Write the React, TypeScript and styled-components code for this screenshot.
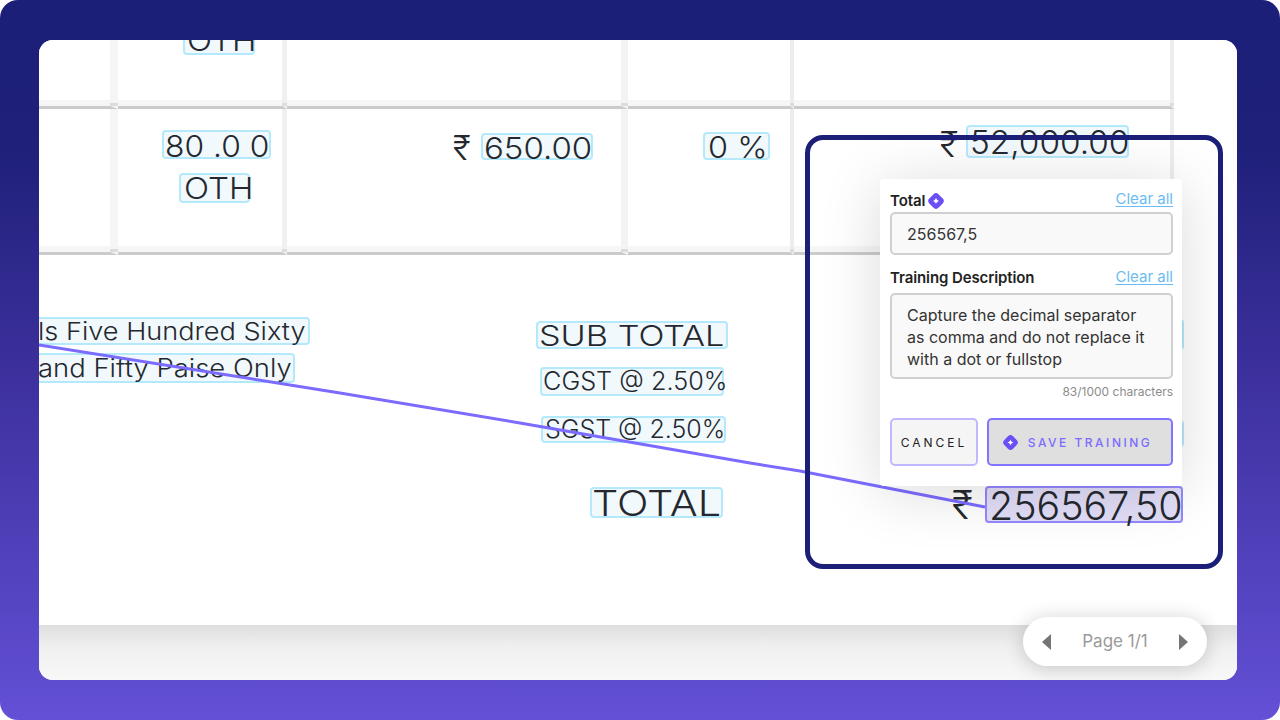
import styled, { createGlobalStyle } from "styled-components";

const GlobalStyle = createGlobalStyle`
  html, body {
    margin: 0;
    padding: 0;
    background: #fff;
  }
  * {
    box-sizing: border-box;
  }
`;

interface TokenData {
  text: string;
  x: number;
  y: number;
  w: number;
  h: number;
  size: number;
  stretch?: number;
  pad?: number;
  lift?: number;
  active?: boolean;
}

// window coordinates, the boxes sit on the scanned document
const tokens: TokenData[] = [
  { text: "OTH", x: 144, y: -15, w: 72, h: 30, size: 30, stretch: 1.1, pad: 2 },
  { text: "80 .0 0", x: 123, y: 90, w: 109, h: 29, size: 30, stretch: 1.06, pad: 1, lift: 1 },
  { text: "OTH", x: 140, y: 133, w: 71, h: 30, size: 30, stretch: 1.1, pad: 3 },
  { text: "650.00", x: 442, y: 93, w: 112, h: 27, size: 30, stretch: 1.1, pad: 1, lift: 1 },
  { text: "0 %", x: 664, y: 92, w: 67, h: 28, size: 30, stretch: 1.08, pad: 3, lift: 1 },
  { text: "52,000.00", x: 927, y: 85, w: 163, h: 33, size: 33, stretch: 1.01, pad: 2, lift: 1 },
  { text: "ls Five Hundred Sixty", x: -3, y: 277, w: 274, h: 28, size: 24, stretch: 1.13, pad: 0, lift: 1 },
  { text: "and Fifty Paise Only", x: -3, y: 313, w: 259, h: 30, size: 25, stretch: 1.097, pad: 0 },
  { text: "SUB TOTAL", x: 497, y: 281, w: 192, h: 28, size: 29, stretch: 1.18, pad: 1 },
  { text: "CGST @ 2.50%", x: 501, y: 327, w: 184, h: 29, size: 25, stretch: 1.01, pad: 1 },
  { text: "SGST @ 2.50%", x: 502, y: 376, w: 185, h: 27, size: 25, stretch: 1.0, pad: 2 },
  { text: "TOTAL", x: 551, y: 447, w: 133, h: 31, size: 36, stretch: 1.15, pad: 0 },
  { text: "", x: 1000, y: 279, w: 145, h: 31, size: 20 },
  { text: "", x: 1000, y: 380, w: 145, h: 27, size: 20 },
  { text: "256567,50", x: 946, y: 446, w: 198, h: 37, size: 39, stretch: 1.01, pad: 2, lift: 1, active: true },
];

const rupees = [
  { x: 414, y: 88, size: 34 },
  { x: 901, y: 83, size: 35 },
  { x: 913, y: 441, size: 40 },
];

const columns = [
  { width: 79, line: 8, tone: "#f5f5f5" },
  { width: 169, line: 5, tone: "#f0f0f0" },
  { width: 341, line: 7, tone: "#f3f3f3" },
  { width: 166, line: 4, tone: "#ededed" },
  { width: 380, line: 4, tone: "#ededed" },
];

function Spark({ size }: { size: number }) {
  return (
    <svg width={size} height={size} viewBox="0 0 16 16">
      <rect x="2.2" y="2.2" width="11.6" height="11.6" rx="3.4" transform="rotate(45 8 8)" fill="#6b4ff5" />
      <path
        d="M8 5.2c.3 1.4 1.2 2.4 2.8 2.8-1.6.4-2.5 1.4-2.8 2.8-.3-1.4-1.2-2.4-2.8-2.8 1.6-.4 2.5-1.4 2.8-2.8z"
        fill="#fff"
      />
    </svg>
  );
}

function App() {
  return (
    <Shell>
      <GlobalStyle />
      <Window>
        <Sheet>
          <Table>
            {[69, 146].map(height =>
              columns.map(col => (
                <Cell key={`${height}-${col.width}`} $height={height} $line={col.line} $tone={col.tone} />
              ))
            )}
          </Table>

          {tokens.map(t => (
            <Token
              key={`${t.text}-${t.x}-${t.y}`}
              $x={t.x}
              $y={t.y}
              $w={t.w}
              $h={t.h}
              $size={t.size}
              $pad={t.pad ?? 0}
              $active={t.active}
            >
              <TokenText $stretch={t.stretch ?? 1} $lift={t.lift ?? 0}>
                {t.text}
              </TokenText>
            </Token>
          ))}

          {rupees.map(r => (
            <Rupee key={r.x} $x={r.x} $y={r.y} $size={r.size}>
              ₹
            </Rupee>
          ))}

          <Connector viewBox="0 0 1198 640" width="1198" height="640">
            <polyline
              points="0,305 301,353 481,383 711,423 761,431 946,467"
              fill="none"
              stroke="#7b6cff"
              strokeWidth="3"
            />
          </Connector>

          <Frame />

          <Popup>
            <FieldHead>
              <FieldLabel $drop={2}>
                Total
                <Spark size={18} />
              </FieldLabel>
              <ClearLink>Clear all</ClearLink>
            </FieldHead>
            <ValueBox>256567,5</ValueBox>

            <FieldHead $gap>
              <FieldLabel>Training Description</FieldLabel>
              <ClearLink>Clear all</ClearLink>
            </FieldHead>
            <DescriptionBox>
              Capture the decimal separator
              <br />
              as comma and do not replace it
              <br />
              with a dot or fullstop
            </DescriptionBox>
            <Counter>83/1000 characters</Counter>

            <Actions>
              <CancelButton>CANCEL</CancelButton>
              <SaveButton>
                <Spark size={17} />
                SAVE TRAINING
              </SaveButton>
            </Actions>
          </Popup>
        </Sheet>

        <Footer />

        <Pager>
          <ArrowLeft />
          <PageLabel>Page 1/1</PageLabel>
          <ArrowRight />
        </Pager>
      </Window>
    </Shell>
  );
}

export default App;

const Shell = styled.div`
  width: 1280px;
  height: 720px;
  padding: 40px 43px 40px 39px;
  border-radius: 18px;
  overflow: hidden;
  background: linear-gradient(180deg, #1c1f78 0%, #1e2079 20%, #3b2f9b 50%, #6350d6 100%);
  font-family: Inter, "Liberation Sans", sans-serif;
`;

const Window = styled.div`
  position: relative;
  display: flex;
  flex-direction: column;
  width: 1198px;
  height: 640px;
  border-radius: 14px;
  overflow: hidden;
  background: #fff;
`;

const Sheet = styled.div`
  position: relative;
  height: 585px;
  flex: none;
  background: #fff;
`;

const Footer = styled.div`
  flex: 1;
  background: linear-gradient(180deg, #dedede 0%, #f0f0f0 40%, #f8f8f8 100%);
`;

const Table = styled.div`
  display: grid;
  grid-template-columns: ${columns.map(c => `${c.width}px`).join(" ")};
  width: 1135px;
`;

const Cell = styled.div<{ $height: number; $line: number; $tone: string }>`
  position: relative;
  height: ${p => p.$height}px;
  border-right: ${p => p.$line}px solid ${p => p.$tone};
  border-bottom: 3px solid #cbcbcb;
  box-shadow: inset 0 -6px 0 #f6f6f6;

  &::after {
    content: "";
    position: absolute;
    right: -${p => p.$line}px;
    bottom: 0;
    width: ${p => p.$line}px;
    height: 3px;
    background: #dcdcdc;
  }
`;

const Token = styled.div<{
  $x: number;
  $y: number;
  $w: number;
  $h: number;
  $size: number;
  $pad: number;
  $active?: boolean;
}>`
  position: absolute;
  left: ${p => p.$x}px;
  top: ${p => p.$y}px;
  width: ${p => p.$w}px;
  height: ${p => p.$h}px;
  display: flex;
  align-items: center;
  padding-left: ${p => p.$pad}px;
  white-space: nowrap;
  border-radius: 4px;
  border: 2px solid ${p => (p.$active ? "#9488ff" : "#b4e9fb")};
  background: ${p => (p.$active ? "#e2def9" : "#f1f9fd")};
  color: #25282e;
  font-size: ${p => p.$size}px;
  font-weight: 300;
  line-height: 1;
`;

// the scanned text is wider than any installed face, so it gets stretched per box
const TokenText = styled.span<{ $stretch: number; $lift: number }>`
  display: inline-block;
  transform-origin: left center;
  transform: translateY(${p => p.$lift}px) scaleX(${p => p.$stretch});
`;

const Rupee = styled.span<{ $x: number; $y: number; $size: number }>`
  position: absolute;
  left: ${p => p.$x}px;
  top: ${p => p.$y}px;
  color: #25282e;
  font-size: ${p => p.$size}px;
  font-weight: 300;
  line-height: 1.2;
`;

const Connector = styled.svg`
  position: absolute;
  left: 0;
  top: 0;
  pointer-events: none;
`;

const Frame = styled.div`
  position: absolute;
  left: 766px;
  top: 95px;
  width: 418px;
  height: 434px;
  border: 5px solid #1c1f78;
  border-radius: 18px;
`;

const Popup = styled.div`
  position: absolute;
  left: 841px;
  top: 139px;
  width: 302px;
  height: 307px;
  padding: 11px 9px 0 10px;
  border-radius: 4px;
  background: #fff;
  box-shadow: 0 6px 60px rgba(0, 0, 0, 0.15);
`;

const FieldHead = styled.div<{ $gap?: boolean }>`
  display: flex;
  align-items: center;
  justify-content: space-between;
  height: 19px;
  margin-top: ${p => (p.$gap ? "13px" : "0")};
  margin-bottom: ${p => (p.$gap ? "6px" : "3px")};
`;

const FieldLabel = styled.span<{ $drop?: number }>`
  display: flex;
  align-items: center;
  gap: 2px;
  margin-top: ${p => p.$drop ?? 0}px;
  color: #222;
  font-size: 15px;
  font-weight: 600;
  letter-spacing: -0.1px;
`;

const ClearLink = styled.a`
  margin-top: -3px;
  color: #6bbcf2;
  font-size: 15px;
  text-decoration: underline;
  text-underline-offset: 2px;
`;

const ValueBox = styled.div`
  display: flex;
  align-items: center;
  height: 43px;
  padding-left: 15px;
  border: 2px solid #d0d0d0;
  border-radius: 5px;
  background: #f9f9f9;
  color: #333;
  font-size: 16px;
`;

const DescriptionBox = styled.div`
  height: 86px;
  padding: 9px 0 0 15px;
  border: 2px solid #d0d0d0;
  border-radius: 5px;
  background: #f9f9f9;
  color: #333;
  font-size: 16px;
  line-height: 22px;
  white-space: nowrap;
`;

const Counter = styled.div`
  margin-top: 5px;
  color: #8c8c8c;
  font-size: 12px;
  line-height: 15px;
  text-align: right;
`;

const Actions = styled.div`
  display: flex;
  gap: 9px;
  margin-top: 19px;
`;

const CancelButton = styled.button`
  width: 88px;
  height: 48px;
  padding: 0;
  border: 2px solid #c0b9ff;
  border-radius: 5px;
  background: #f5f5f5;
  color: #222;
  font-family: inherit;
  font-size: 12px;
  font-weight: 400;
  letter-spacing: 3px;
`;

const SaveButton = styled.button`
  display: flex;
  align-items: center;
  justify-content: center;
  gap: 9px;
  width: 186px;
  height: 48px;
  padding: 0 6px 0 0;
  border: 2px solid #8174ff;
  border-radius: 5px;
  background: #dfdfdf;
  color: #7b6cff;
  font-family: inherit;
  font-size: 12px;
  font-weight: 500;
  letter-spacing: 2.5px;
`;

const Pager = styled.div`
  position: absolute;
  left: 984px;
  top: 577px;
  display: flex;
  align-items: center;
  justify-content: space-between;
  width: 184px;
  height: 49px;
  padding: 0 19px;
  border-radius: 25px;
  background: #fff;
  box-shadow: 0 2px 20px rgba(0, 0, 0, 0.2);
`;

const PageLabel = styled.span`
  margin-top: -2px;
  color: #9a9a9a;
  font-size: 17px;
`;

const ArrowLeft = styled.span`
  width: 0;
  height: 0;
  border-top: 8px solid transparent;
  border-bottom: 8px solid transparent;
  border-right: 9px solid #757575;
`;

const ArrowRight = styled.span`
  width: 0;
  height: 0;
  border-top: 8px solid transparent;
  border-bottom: 8px solid transparent;
  border-left: 9px solid #757575;
`;
